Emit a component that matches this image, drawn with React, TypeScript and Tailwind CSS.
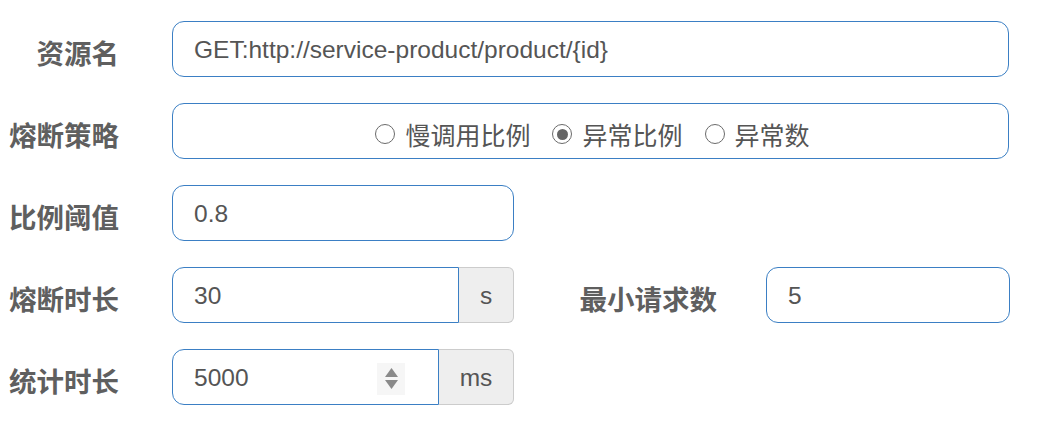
const LABEL = "w-[119px] shrink-0 pt-[8px] text-right text-[27.5px] font-bold text-[#5f5f5f] font-['Noto_Sans_CJK_SC',sans-serif] leading-none";
const BOX = 'h-[56px] border border-[#3b7fc4] bg-white flex items-center px-[21px] pt-[3px] text-[24.5px] text-[#555]';

function Radio({ label, checked }: { label: string; checked?: boolean }) {
  return (
    <span className="flex items-center gap-[10px]">
      <span className="w-[20px] h-[20px] rounded-full border-[1.5px] border-[#6b6b6b] flex items-center justify-center">
        {checked && <span className="w-[11px] h-[11px] rounded-full bg-[#666]" />}
      </span>
      <span className="text-[25px] text-[#555] font-['Noto_Sans_CJK_SC',sans-serif] leading-none">{label}</span>
    </span>
  );
}

function Addon({ text, width }: { text: string; width: string }) {
  return (
    <div
      className={`h-[56px] ${width} shrink-0 flex items-center justify-center pt-[3px] bg-[#eee] border border-l-0 border-[#ccc] rounded-r-[6px] text-[24.5px] text-[#555]`}
    >
      {text}
    </div>
  );
}

export default function App() {
  return (
    <div className="w-[1040px] h-[436px] bg-white pt-[21px] font-['Liberation_Sans','Noto_Sans_CJK_SC',sans-serif]">
      <div className="flex flex-col gap-[26px]">
        {/* 资源名 */}
        <div className="flex items-center">
          <div className={LABEL}>资源名</div>
          <div className={`${BOX} ml-[53px] w-[837px] rounded-[12px]`}>GET:http://service-product/product/{'{id}'}</div>
        </div>

        {/* 熔断策略 */}
        <div className="flex items-center">
          <div className={LABEL}>熔断策略</div>
          <div className="ml-[53px] w-[837px] h-[56px] border border-[#3b7fc4] rounded-[12px] flex items-center justify-center gap-[22px] pl-[4px] pt-[6px]">
            <Radio label="慢调用比例" />
            <Radio label="异常比例" checked />
            <Radio label="异常数" />
          </div>
        </div>

        {/* 比例阈值 */}
        <div className="flex items-center">
          <div className={LABEL}>比例阈值</div>
          <div className={`${BOX} ml-[53px] w-[342px] rounded-[12px]`}>0.8</div>
        </div>

        {/* 熔断时长 / 最小请求数 */}
        <div className="flex items-center">
          <div className={LABEL}>熔断时长</div>
          <div className="ml-[53px] flex">
            <div className={`${BOX} w-[287px] rounded-l-[12px]`}>30</div>
            <Addon text="s" width="w-[55px]" />
          </div>
          <div className="w-[203px] shrink-0 pt-[8px] text-right text-[27.5px] font-bold text-[#5f5f5f] font-['Noto_Sans_CJK_SC',sans-serif] leading-none">
            最小请求数
          </div>
          <div className={`${BOX} ml-[49px] w-[244px] rounded-[12px]`}>5</div>
        </div>

        {/* 统计时长 */}
        <div className="flex items-center">
          <div className={LABEL}>统计时长</div>
          <div className="ml-[53px] flex">
            <div className={`${BOX} w-[267px] rounded-l-[12px] justify-between pr-[33px]`}>
              <span>5000</span>
              <span className="w-[28px] h-[32px] bg-[#f6f6f6] flex flex-col items-center justify-center gap-[3px]">
                <svg width="13" height="9" viewBox="0 0 13 9">
                  <path d="M6.5 0 L13 9 L0 9 Z" fill="#8a8a8a" />
                </svg>
                <svg width="13" height="9" viewBox="0 0 13 9">
                  <path d="M0 0 L13 0 L6.5 9 Z" fill="#8a8a8a" />
                </svg>
              </span>
            </div>
            <Addon text="ms" width="w-[75px]" />
          </div>
        </div>
      </div>
    </div>
  );
}
